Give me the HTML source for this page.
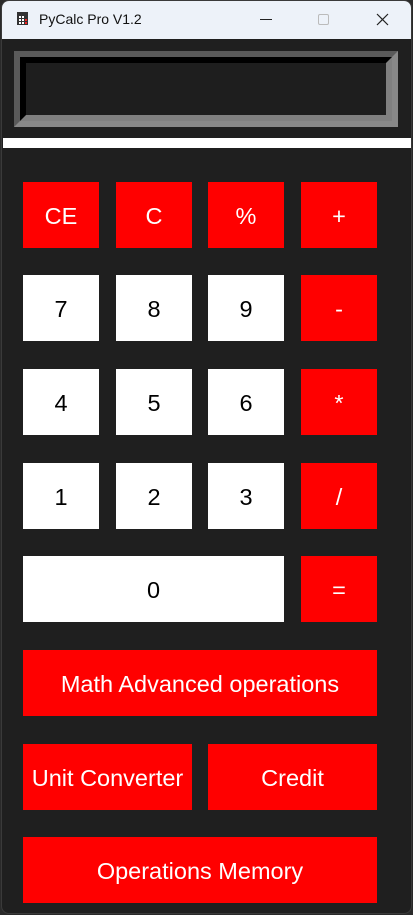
<!DOCTYPE html>
<html><head><meta charset="utf-8"><style>
*{margin:0;padding:0;box-sizing:border-box}
html,body{width:413px;height:915px;overflow:hidden;background:#2a2a2a;font-family:"Liberation Sans",Arial,sans-serif}
.win{position:absolute;left:1px;top:0;width:411px;height:914px;background:#1f1f1f;border:1px solid #3a3a3a;border-radius:8px;overflow:hidden}
.title{position:absolute;left:0;top:0;width:411px;height:38px;background:#edf2f9}
.title .t{position:absolute;left:37px;top:10px;font-size:14px;color:#111;font-family:"Liberation Sans",sans-serif}
.ico{position:absolute;left:15px;top:11px;width:11px;height:13px;background:#333}
.ico i{position:absolute;width:2px;height:2px;background:#fff}
.b{position:absolute;display:flex;align-items:center;justify-content:center;font-size:23.5px;color:#fff;background:#ff0000;padding-top:2px}
.w{background:#fff;color:#000}
.disp{position:absolute;left:12px;top:50px;width:384px;height:76px;border:6px solid;border-color:#5a5a5a #888 #888 #5a5a5a}
.disp .in{position:absolute;left:0;top:0;right:0;bottom:0;border:6px solid;border-color:#000 #808080 #808080 #000;background:#1e1e1e}
</style></head><body>
<div class="win">
<div class="title">
<div class="ico"><i style="left:2px;top:4px"></i><i style="left:5px;top:4px"></i><i style="left:2px;top:7px"></i><i style="left:5px;top:7px"></i><i style="left:8px;top:7px;background:#e22"></i><i style="left:8px;top:10px;background:#e22"></i><i style="left:2px;top:10px"></i><i style="left:5px;top:10px"></i></div>
<div class="t">PyCalc Pro V1.2</div>
<div style="position:absolute;left:258px;top:18px;width:12px;height:1px;background:#222"></div>
<div style="position:absolute;left:316px;top:13px;width:11px;height:11px;border:1px solid #bbb;border-radius:2px"></div>
<svg style="position:absolute;left:374px;top:12px" width="13" height="13"><path d="M1 1L12 12M12 1L1 12" stroke="#222" stroke-width="1.2"/></svg>
</div>
<div class="disp"><div class="in"></div></div>
<div style="position:absolute;left:1px;top:137px;width:409px;height:10px;background:#fff"></div>
</div>
<div class="b" style="left:23px;top:182px;width:76px;height:66px">CE</div>
<div class="b" style="left:116px;top:182px;width:76px;height:66px">C</div>
<div class="b" style="left:208px;top:182px;width:76px;height:66px">%</div>
<div class="b" style="left:301px;top:182px;width:76px;height:66px">+</div>
<div class="b w" style="left:23px;top:275px;width:76px;height:66px">7</div>
<div class="b w" style="left:116px;top:275px;width:76px;height:66px">8</div>
<div class="b w" style="left:208px;top:275px;width:76px;height:66px">9</div>
<div class="b" style="left:301px;top:275px;width:76px;height:66px">-</div>
<div class="b w" style="left:23px;top:369px;width:76px;height:66px">4</div>
<div class="b w" style="left:116px;top:369px;width:76px;height:66px">5</div>
<div class="b w" style="left:208px;top:369px;width:76px;height:66px">6</div>
<div class="b" style="left:301px;top:369px;width:76px;height:66px">*</div>
<div class="b w" style="left:23px;top:463px;width:76px;height:66px">1</div>
<div class="b w" style="left:116px;top:463px;width:76px;height:66px">2</div>
<div class="b w" style="left:208px;top:463px;width:76px;height:66px">3</div>
<div class="b" style="left:301px;top:463px;width:76px;height:66px">/</div>
<div class="b w" style="left:23px;top:556px;width:261px;height:66px">0</div>
<div class="b" style="left:301px;top:556px;width:76px;height:66px">=</div>
<div class="b" style="left:23px;top:650px;width:354px;height:66px">Math Advanced operations</div>
<div class="b" style="left:23px;top:744px;width:169px;height:66px">Unit Converter</div>
<div class="b" style="left:208px;top:744px;width:169px;height:66px">Credit</div>
<div class="b" style="left:23px;top:837px;width:354px;height:66px">Operations Memory</div>
</body></html>
